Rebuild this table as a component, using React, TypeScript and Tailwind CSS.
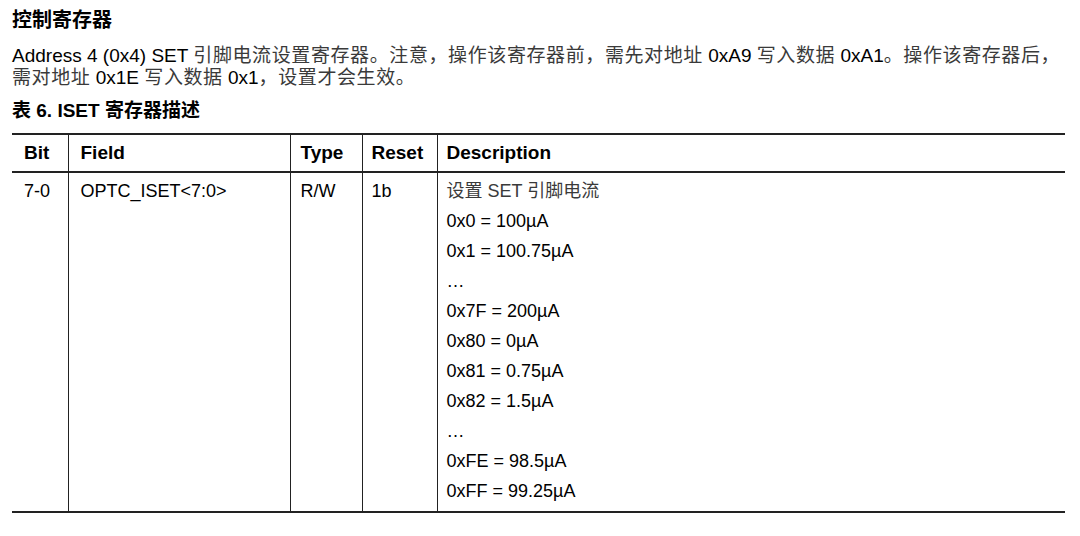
const font = { fontFamily: '"Liberation Sans", "Noto Sans CJK SC", sans-serif' };

const values = [
  "设置 SET 引脚电流",
  "0x0 = 100µA",
  "0x1 = 100.75µA",
  "…",
  "0x7F = 200µA",
  "0x80 = 0µA",
  "0x81 = 0.75µA",
  "0x82 = 1.5µA",
  "…",
  "0xFE = 98.5µA",
  "0xFF = 99.25µA",
];

function Zh({ children }: { children: React.ReactNode }) {
  return <span className="text-[#3a3a3a] tracking-[0.6px]">{children}</span>;
}

export default function App() {
  return (
    <div className="w-[1080px] h-[536px] bg-white px-[12px] text-black" style={font}>
      <h1 className="mt-[8px] text-[20px] leading-[24px] font-bold">控制寄存器</h1>
      <p className="mt-[13px] text-[19px] leading-[22px] whitespace-nowrap">
        Address 4 (0x4) SET <Zh>引脚电流设置寄存器。注意，操作该寄存器前，需先对地址</Zh> 0xA9 <Zh>写入数据</Zh> 0xA1<Zh>。操作该寄存器后，</Zh>
        <br />
        <Zh>需对地址</Zh> 0x1E <Zh>写入数据</Zh> 0x1<Zh>，设置才会生效。</Zh>
      </p>
      <h2 className="mt-[10px] text-[19px] leading-[24px] font-bold">表 6. ISET 寄存器描述</h2>
      <table className="mt-[10px] w-[1053px] border-collapse text-[18px]">
        <thead>
          <tr className="border-t-2 border-b-2 border-[#222] text-[19px] font-bold">
            <th className="w-[56px] h-[38px] pl-[12px] text-left">Bit</th>
            <th className="w-[222px] pl-[12px] text-left border-l border-[#222]">Field</th>
            <th className="w-[72px] pl-[10px] text-left border-l border-[#222]">Type</th>
            <th className="w-[75px] pl-[9px] text-left border-l border-[#222]">Reset</th>
            <th className="pl-[9px] text-left border-l border-[#222]">Description</th>
          </tr>
        </thead>
        <tbody>
          <tr className="border-b-2 border-[#222] align-top">
            <td className="pl-[12px] pt-[3px] leading-[30px]">7-0</td>
            <td className="pl-[12px] pt-[3px] leading-[30px] border-l border-[#222]">OPTC_ISET&lt;7:0&gt;</td>
            <td className="pl-[10px] pt-[3px] leading-[30px] border-l border-[#222]">R/W</td>
            <td className="pl-[9px] pt-[3px] leading-[30px] border-l border-[#222]">1b</td>
            <td className="pl-[9px] pt-[3px] pb-[5px] leading-[30px] border-l border-[#222]">
              {values.map((v, i) => (
                <div key={i} className={i === 0 ? "text-[#3a3a3a]" : ""}>{v}</div>
              ))}
            </td>
          </tr>
        </tbody>
      </table>
    </div>
  );
}
